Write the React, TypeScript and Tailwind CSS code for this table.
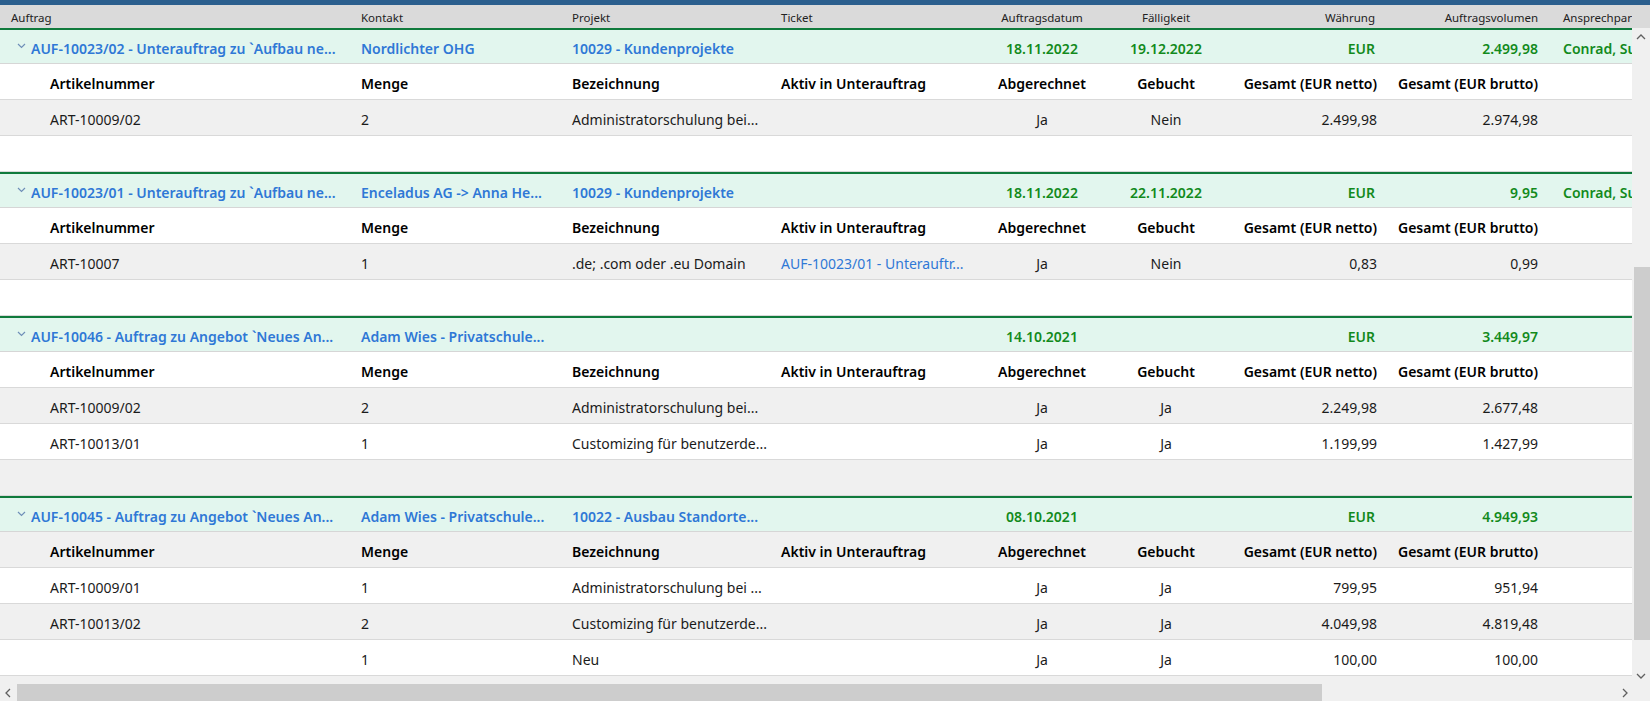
import React from 'react'

type Item = {
  nr: string
  menge: string
  bez: string
  aktiv: string
  abg: string
  geb: string
  netto: string
  brutto: string
}

type Group = {
  auftrag: string
  kontakt: string
  projekt: string
  datum: string
  faellig: string
  waehrung: string
  volumen: string
  ansprech: string
  items: Item[]
}

const groups: Group[] = [
  {
    auftrag: 'AUF-10023/02 - Unterauftrag zu `Aufbau ne...',
    kontakt: 'Nordlichter OHG',
    projekt: '10029 - Kundenprojekte',
    datum: '18.11.2022',
    faellig: '19.12.2022',
    waehrung: 'EUR',
    volumen: '2.499,98',
    ansprech: 'Conrad, Susanne',
    items: [
      { nr: 'ART-10009/02', menge: '2', bez: 'Administratorschulung bei...', aktiv: '', abg: 'Ja', geb: 'Nein', netto: '2.499,98', brutto: '2.974,98' }
    ]
  },
  {
    auftrag: 'AUF-10023/01 - Unterauftrag zu `Aufbau ne...',
    kontakt: 'Enceladus AG -> Anna He...',
    projekt: '10029 - Kundenprojekte',
    datum: '18.11.2022',
    faellig: '22.11.2022',
    waehrung: 'EUR',
    volumen: '9,95',
    ansprech: 'Conrad, Susanne',
    items: [
      { nr: 'ART-10007', menge: '1', bez: '.de; .com oder .eu Domain', aktiv: 'AUF-10023/01 - Unterauftr...', abg: 'Ja', geb: 'Nein', netto: '0,83', brutto: '0,99' }
    ]
  },
  {
    auftrag: 'AUF-10046 - Auftrag zu Angebot `Neues An...',
    kontakt: 'Adam Wies - Privatschule...',
    projekt: '',
    datum: '14.10.2021',
    faellig: '',
    waehrung: 'EUR',
    volumen: '3.449,97',
    ansprech: '',
    items: [
      { nr: 'ART-10009/02', menge: '2', bez: 'Administratorschulung bei...', aktiv: '', abg: 'Ja', geb: 'Ja', netto: '2.249,98', brutto: '2.677,48' },
      { nr: 'ART-10013/01', menge: '1', bez: 'Customizing für benutzerde...', aktiv: '', abg: 'Ja', geb: 'Ja', netto: '1.199,99', brutto: '1.427,99' }
    ]
  },
  {
    auftrag: 'AUF-10045 - Auftrag zu Angebot `Neues An...',
    kontakt: 'Adam Wies - Privatschule...',
    projekt: '10022 - Ausbau Standorte...',
    datum: '08.10.2021',
    faellig: '',
    waehrung: 'EUR',
    volumen: '4.949,93',
    ansprech: '',
    items: [
      { nr: 'ART-10009/01', menge: '1', bez: 'Administratorschulung bei ...', aktiv: '', abg: 'Ja', geb: 'Ja', netto: '799,95', brutto: '951,94' },
      { nr: 'ART-10013/02', menge: '2', bez: 'Customizing für benutzerde...', aktiv: '', abg: 'Ja', geb: 'Ja', netto: '4.049,98', brutto: '4.819,48' },
      { nr: '', menge: '1', bez: 'Neu', aktiv: '', abg: 'Ja', geb: 'Ja', netto: '100,00', brutto: '100,00' }
    ]
  }
]

// shared column grid for header, group rows and position rows
const cols = 'grid grid-cols-[355px_211px_209px_215px_104px_144px_145px_163px_200px] items-center'

const Chevron = ({ dir }: { dir: 'up' | 'down' | 'left' | 'right' }) => {
  const pts = {
    up: '1,6 5,2 9,6',
    down: '1,2 5,6 9,2',
    left: '6,1 2,5 6,9',
    right: '3,1 7,5 3,9'
  }[dir]
  return (
    <svg width="10" height={dir === 'up' || dir === 'down' ? 8 : 10} viewBox={dir === 'up' || dir === 'down' ? '0 0 10 8' : '0 0 10 10'}>
      <polyline points={pts} fill="none" stroke="#606060" strokeWidth="1.3" />
    </svg>
  )
}

const GroupRow = ({ g }: { g: Group }) => (
  <div className={`${cols} h-[36px] pt-[4px] bg-[#e2f6ee] border-t-2 border-t-[#0f7a3c] border-b border-b-[#d6d6d6] font-semibold text-[14px]`}>
    <div className="flex items-center pl-[17px] pr-3 min-w-0">
      <svg width="9" height="6" viewBox="0 0 9 6" className="mr-[5px] mb-[6px] shrink-0">
        <polyline points="1,1 4.5,4.5 8,1" fill="none" stroke="#6f8fb8" strokeWidth="1.2" />
      </svg>
      <span className="truncate text-[#2f78d6]">{g.auftrag}</span>
    </div>
    <div className="pl-[6px] truncate text-[#2f78d6]">{g.kontakt}</div>
    <div className="pl-[6px] truncate text-[#2f78d6]">{g.projekt}</div>
    <div />
    <div className="text-center text-[#128a1c]">{g.datum}</div>
    <div className="text-center text-[#128a1c]">{g.faellig}</div>
    <div className="text-right pr-[8px] text-[#128a1c]">{g.waehrung}</div>
    <div className="text-right pr-[8px] text-[#128a1c]">{g.volumen}</div>
    <div className="pl-[17px] whitespace-nowrap text-[#128a1c]">{g.ansprech}</div>
  </div>
)

const SubRow = ({ cells, bold, odd }: { cells: Item; bold?: boolean; odd: boolean }) => (
  <div className={`${cols} h-[36px] pt-[4px] border-b border-b-[#d9d9d9] text-[14px] ${odd ? 'bg-white' : 'bg-[#f0f0f0]'} ${bold ? 'font-semibold text-black' : 'text-[#1b1b1b]'}`}>
    <div className="pl-[50px] truncate">{cells.nr}</div>
    <div className="pl-[6px] truncate">{cells.menge}</div>
    <div className="pl-[6px] truncate">{cells.bez}</div>
    <div className={`pl-[6px] truncate ${bold ? '' : 'text-[#2f78d6]'}`}>{cells.aktiv}</div>
    <div className="text-center whitespace-nowrap">{cells.abg}</div>
    <div className="text-center whitespace-nowrap">{cells.geb}</div>
    <div className="text-right pr-[6px] whitespace-nowrap">{cells.netto}</div>
    <div className="text-right pr-[8px] whitespace-nowrap">{cells.brutto}</div>
    <div />
  </div>
)

const subHeader: Item = {
  nr: 'Artikelnummer',
  menge: 'Menge',
  bez: 'Bezeichnung',
  aktiv: 'Aktiv in Unterauftrag',
  abg: 'Abgerechnet',
  geb: 'Gebucht',
  netto: 'Gesamt (EUR netto)',
  brutto: 'Gesamt (EUR brutto)'
}

const emptyItem: Item = { nr: '', menge: '', bez: '', aktiv: '', abg: '', geb: '', netto: '', brutto: '' }

export default function App() {
  // alternating backgrounds count every row, group rows included
  let idx = 0
  const rows: React.ReactNode[] = []
  groups.forEach((g, gi) => {
    rows.push(<GroupRow key={`g${gi}`} g={g} />)
    idx++
    rows.push(<SubRow key={`h${gi}`} cells={subHeader} bold odd={idx % 2 === 1} />)
    idx++
    g.items.forEach((it, ii) => {
      rows.push(<SubRow key={`i${gi}-${ii}`} cells={it} odd={idx % 2 === 1} />)
      idx++
    })
    rows.push(<SubRow key={`e${gi}`} cells={emptyItem} odd={idx % 2 === 1} />)
    idx++
  })

  return (
    <div className="w-[1650px] h-[701px] flex flex-col overflow-hidden bg-white font-['Noto_Sans','Open_Sans',sans-serif]">
      <div className="h-[5px] bg-[#2b5f8e] shrink-0" />
      <div className="h-[23px] shrink-0 bg-[#dadada] overflow-hidden">
        <div className="w-[1632px] overflow-hidden">
          <div className={`${cols} h-[23px] pt-[2px] text-[11.5px] text-[#222]`}>
            <div className="pl-[11px]">Auftrag</div>
            <div className="pl-[6px]">Kontakt</div>
            <div className="pl-[6px]">Projekt</div>
            <div className="pl-[6px]">Ticket</div>
            <div className="text-center">Auftragsdatum</div>
            <div className="text-center">Fälligkeit</div>
            <div className="text-right pr-[8px]">Währung</div>
            <div className="text-right pr-[8px]">Auftragsvolumen</div>
            <div className="pl-[17px] whitespace-nowrap">Ansprechpartner</div>
          </div>
        </div>
      </div>
      <div className="flex flex-1 min-h-0">
        <div className="w-[1632px] overflow-hidden">{rows}</div>
        <div className="w-[18px] bg-[#f0f0f0] flex flex-col">
          <div className="h-[17px] flex items-center justify-center">
            <Chevron dir="up" />
          </div>
          <div className="flex-1 flex flex-col pt-[222px] pb-[27px]">
            <div className="ml-[2px] w-[16px] flex-1 bg-[#cdcdcd]" />
          </div>
          <div className="h-[17px] flex items-center justify-center">
            <Chevron dir="down" />
          </div>
        </div>
      </div>
      <div className="h-[17px] shrink-0 bg-[#f0f0f0] flex items-stretch">
        <div className="w-[17px] flex items-center justify-center">
          <Chevron dir="left" />
        </div>
        <div className="w-[1305px] bg-[#cdcdcd]" />
        <div className="flex-1" />
        <div className="w-[17px] flex items-center justify-center">
          <Chevron dir="right" />
        </div>
        <div className="w-[17px]" />
      </div>
    </div>
  )
}
